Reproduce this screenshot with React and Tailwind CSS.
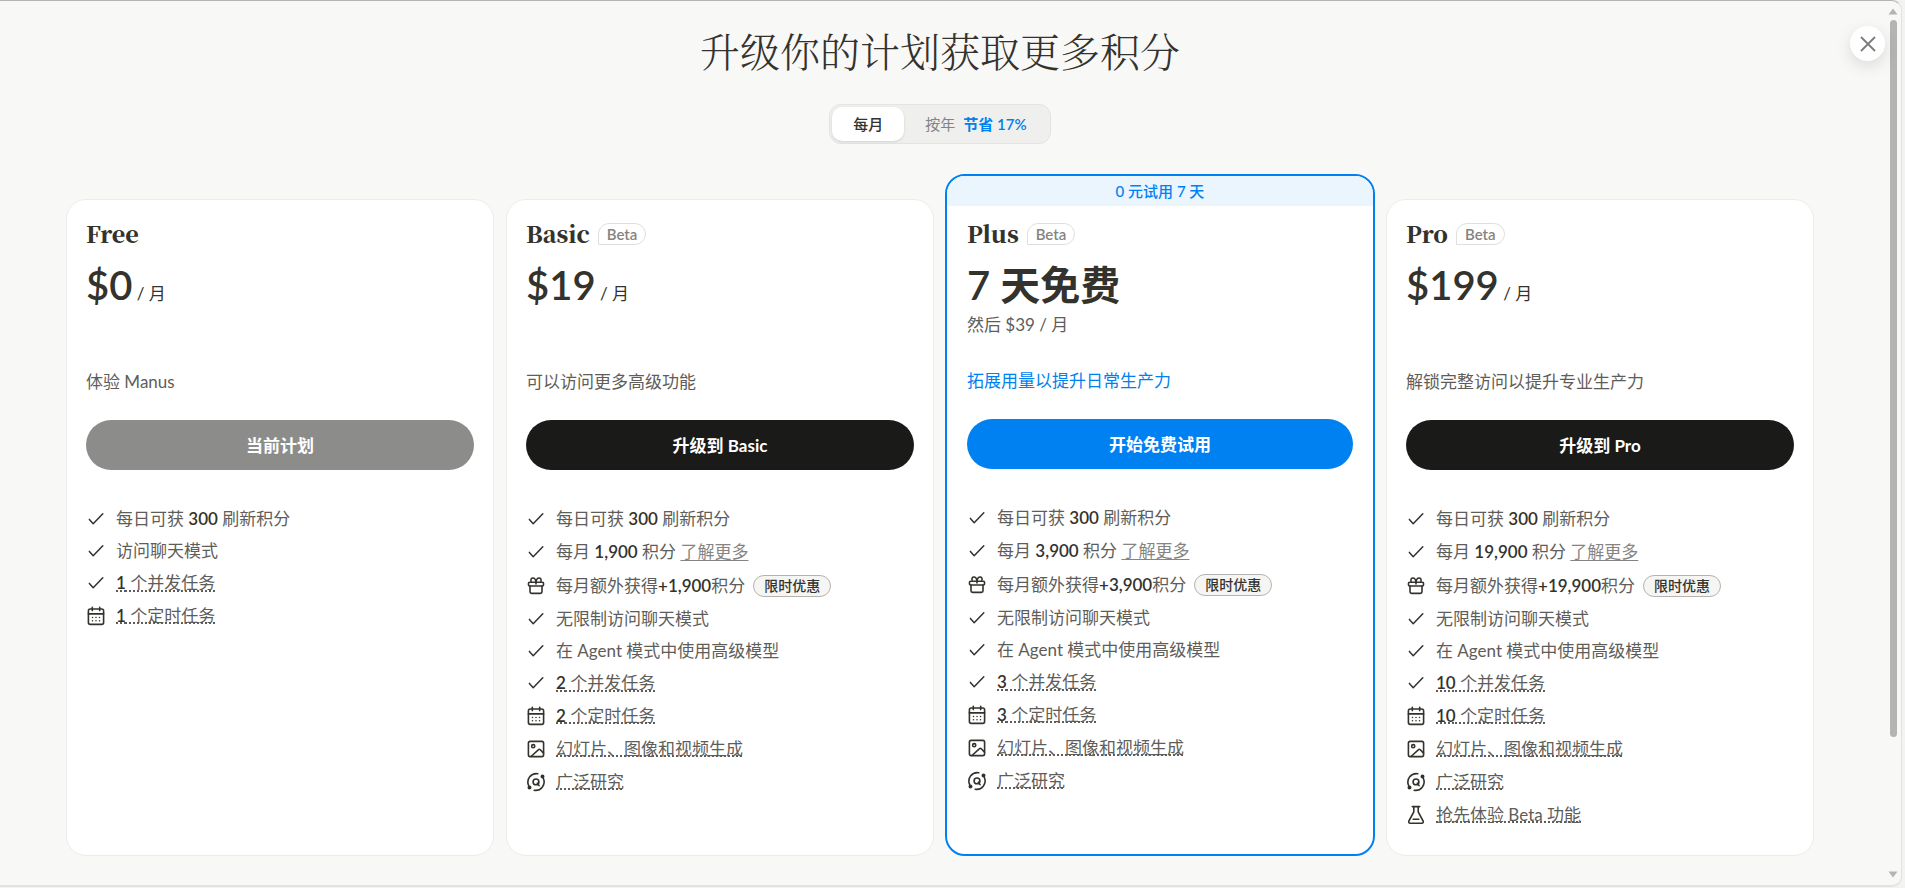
import React, { useState } from "react";

const sans = "font-['Lato','Noto_Sans_CJK_SC',sans-serif]";
const serif = "font-['Noto_Serif_CJK_SC','Noto_Serif_SC','Noto_Sans_CJK_SC',serif]";

function Icon({ children }) {
  return (
    <svg
      viewBox="0 0 20 20"
      className="size-5 shrink-0 text-[#34322d]"
      fill="none"
      stroke="currentColor"
      strokeWidth="1.6"
      strokeLinecap="round"
      strokeLinejoin="round"
      aria-hidden="true"
    >
      {children}
    </svg>
  );
}

const icons = {
  check: <path d="M3.4 10.4 7.2 14.7 16.8 4.7" strokeWidth="1.5" />,
  gift: (
    <>
      <rect x="2.5" y="6.2" width="15" height="3.8" rx="1" />
      <path d="M4 10v5.8c0 .9.6 1.600 1.600 1.600h8.800c1 0 1.600-.7 1.600-1.600V10M10 6.2v1.8" />
      <path d="M10 6.200C9.700 3.600 8.600 2 6.900 2a2 2 0 0 0-1.700 3.100M10 6.200C10.300 3.600 11.400 2 13.100 2a2 2 0 0 1 1.700 3.100" />
    </>
  ),
  calendar: (
    <>
      <rect x="2.400" y="3" width="15.200" height="15.400" rx="1.800" />
      <path d="M2.400 7.900h15.200M6.300 1.200v3.400M13.700 1.200v3.400" />
      <path d="M6.500 11.500h.01M10 11.500h.01M13.500 11.500h.01M6.500 14.700h.01M10 14.700h.01M13.500 14.700h.01" strokeWidth="1.5" />
    </>
  ),
  image: (
    <>
      <rect x="2.400" y="2.400" width="15.200" height="15.200" rx="1.800" />
      <circle cx="7.200" cy="7.200" r="1.600" />
      <path d="M5 17.500l7.300-6.700c.7-.7 1.400-.6 2 0l3.200 3.300" />
    </>
  ),
  research: (
    <>
      <path d="M11.800 1.800a8.400 8.400 0 0 0-9.200 11.600M8.200 18.200a8.400 8.400 0 0 0 9.200-11.600" />
      <circle cx="10" cy="9.900" r="2.900" />
      <path d="M11.400 11.200l1.700 2.400" />
      <circle cx="16.500" cy="4.400" r="1.200" fill="currentColor" />
      <circle cx="3.500" cy="15.600" r="1.200" fill="currentColor" />
    </>
  ),
  flask: (
    <>
      <path d="M6.300 1.600h7.400M7.800 1.600v5.200L2.900 16c-.6 1.200.1 2.300 1.300 2.300h11.600c1.200 0 1.900-1.100 1.300-2.300L12.200 6.800V1.600" />
      <path d="M7.200 14.200h5.600" />
    </>
  ),
};

function Num({ children }) {
  return <strong className="font-semibold text-[#34322d]">{children}</strong>;
}

function Tip({ children }) {
  return (
    <span className="underline decoration-dotted decoration-[#5e5d59] decoration-2 underline-offset-1">
      {children}
    </span>
  );
}

function Row({ icon = "check", className = "min-h-[22px]", children }) {
  return (
    <li className={`flex items-center gap-[10px] ${className}`}>
      <Icon>{icons[icon]}</Icon>
      <div className="flex items-center gap-2">{children}</div>
    </li>
  );
}

function Features({ credits, tasks, beta }) {
  return (
    <ul className="flex flex-col gap-[10px] text-[17px] leading-[22px] text-[#5e5d59]">
      <Row>
        <span>每日可获 <Num>300</Num> 刷新积分</span>
      </Row>
      {credits ? (
        <>
          <Row className="min-h-6">
            <span>
              每月 <Num>{credits}</Num> 积分{" "}
              <a href="#credits" className="text-[#858481] underline underline-offset-2">了解更多</a>
            </span>
          </Row>
          <Row icon="gift" className="min-h-6">
            <span>每月额外获得<Num>+{credits}</Num>积分</span>
            <span className="flex h-[22px] items-center rounded-full border border-[#b4b3b0] bg-[#f5f5f4] px-[10px] text-[14px] font-medium text-[#34322d]">
              限时优惠
            </span>
          </Row>
          <Row>无限制访问聊天模式</Row>
          <Row>在 Agent 模式中使用高级模型</Row>
        </>
      ) : (
        <Row>访问聊天模式</Row>
      )}
      <Row><Tip><Num>{tasks}</Num> 个并发任务</Tip></Row>
      <Row icon="calendar" className="min-h-[23px]"><Tip><Num>{tasks}</Num> 个定时任务</Tip></Row>
      {credits && (
        <>
          <Row icon="image" className="min-h-[23px]"><Tip>幻灯片、图像和视频生成</Tip></Row>
          <Row icon="research" className="min-h-[23px]"><Tip>广泛研究</Tip></Row>
        </>
      )}
      {beta && <Row icon="flask" className="min-h-[23px]"><Tip>抢先体验 Beta 功能</Tip></Row>}
    </ul>
  );
}

function Plan({ plan }) {
  const { name, price, then, tagline, action, featured, current } = plan;
  return (
    <section
      className={
        featured
          ? "-mx-px -mt-[25px] flex flex-col overflow-hidden rounded-[20px] border-2 border-[#0081f2] bg-white"
          : "flex flex-col overflow-hidden rounded-[20px] border border-[#ededec] bg-white"
      }
    >
      {featured && (
        <p className="h-[30px] bg-[#ebf5fe] text-center text-[15px] font-medium leading-[30px] text-[#0081f2]">
          0 元试用 7 天
        </p>
      )}
      <div className={featured ? "px-5 pb-7 pt-[14px]" : "px-[19px] pb-[29px] pt-5"}>
        <div className="flex h-[28px] items-center gap-2">
          <h2 className={`text-[23px] font-black leading-[26px] ${serif}`}>{name}</h2>
          {!current && (
            <span className="flex h-[22px] items-center rounded-full rounded-bl-none border border-[#dfdfdd] px-2 text-[15px] font-semibold text-[#858481]">
              Beta
            </span>
          )}
        </div>
        <div className={`flex flex-col ${featured ? "mt-3 h-[103px]" : "mt-3 h-[104px]"}`}>
          <p className="h-[50px] whitespace-nowrap text-[17px] leading-[50px]">
            <span className="text-[40px] font-semibold">{price}</span>
            {!then && " / 月"}
          </p>
          {then && <p className="text-[17px] leading-[30px] text-[#5e5d59]">{then}</p>}
        </div>
        <p className={`mt-[6px] text-[17px] leading-6 ${featured ? "text-[#0081f2]" : "text-[#5e5d59]"}`}>
          {tagline}
        </p>
        <button
          type="button"
          disabled={current}
          className={`mt-[26px] h-[50px] w-full rounded-full pt-[2px] text-[17px] font-bold text-white ${
            featured ? "bg-[#0081f2]" : current ? "bg-[#8c8c8b]" : "bg-[#1a1a19]"
          }`}
        >
          {action}
        </button>
        <div className="mt-[38px]">
          <Features credits={plan.credits} tasks={plan.tasks} beta={plan.beta} />
        </div>
      </div>
    </section>
  );
}

const plans = [
  { name: "Free", price: "$0", tagline: "体验 Manus", action: "当前计划", tasks: "1", current: true },
  { name: "Basic", price: "$19", tagline: "可以访问更多高级功能", action: "升级到 Basic", credits: "1,900", tasks: "2" },
  {
    name: "Plus",
    price: "7 天免费",
    then: "然后 $39 / 月",
    tagline: "拓展用量以提升日常生产力",
    action: "开始免费试用",
    credits: "3,900",
    tasks: "3",
    featured: true,
  },
  { name: "Pro", price: "$199", tagline: "解锁完整访问以提升专业生产力", action: "升级到 Pro", credits: "19,900", tasks: "10", beta: true },
];

export default function App() {
  const [yearly, setYearly] = useState(false);
  const active = "bg-white font-medium text-[#34322d] shadow-sm";
  const idle = "text-[#858481]";
  return (
    <div lang="zh-CN" className={`min-h-screen bg-[#f3f3f2] pr-[3px] pb-[1px] text-[#34322d] ${sans}`}>
      <main className="relative flex min-h-[887px] rounded-r-[10px] border-b-2 border-r border-t border-[#e2e2e1] border-t-[#b4b4b3] bg-[#f8f8f7]">
        <div className="flex-1 px-[66px]">
          <h1 className={`mt-[19px] text-center text-[40px] font-light leading-[60px] ${serif}`}>
            升级你的计划获取更多积分
          </h1>
          <div className="mt-6 flex justify-center">
            <div className="flex h-10 items-center rounded-[12px] border border-[#e4e4e3] bg-[#efefee] px-[2px] text-[15px]">
              <button
                type="button"
                onClick={() => setYearly(false)}
                className={`h-[34px] rounded-[10px] px-[21px] ${yearly ? idle : active}`}
              >
                每月
              </button>
              <button
                type="button"
                onClick={() => setYearly(true)}
                className={`flex h-[34px] items-center gap-2 rounded-[10px] px-[21px] ${yearly ? active : idle}`}
              >
                按年 <span className="font-semibold text-[#0081f2]">节省 17%</span>
              </button>
            </div>
          </div>
          <div className="mt-[55px] grid grid-cols-4 gap-3">
            {plans.map((p) => (
              <Plan key={p.name} plan={p} />
            ))}
          </div>
        </div>
        <div className="flex w-[21px] flex-col items-end justify-between py-[7px] pr-[3px]" aria-hidden="true">
          <svg viewBox="0 0 10 7" className="h-[7px] w-[10px]"><path d="M5 0.500 9.500 6.500h-9z" fill="#b4b4b3" /></svg>
          <div className="mr-px mt-[5px] w-[7px] grow-[717] rounded-full bg-[#b4b4b3]" />
          <div className="grow-[134]" />
          <svg viewBox="0 0 10 7" className="h-[7px] w-[10px]"><path d="M5 6.500 9.500 0.500h-9z" fill="#b4b4b3" /></svg>
        </div>
        <button
          type="button"
          aria-label="关闭"
          className="absolute right-4 top-[25px] flex size-[35px] items-center justify-center rounded-full bg-white shadow-[0_5px_16px_rgba(0,0,0,0.12)]"
        >
          <svg viewBox="0 0 16 16" className="size-4" fill="none" stroke="#7d7c79" strokeWidth="1.800" strokeLinecap="round">
            <path d="M1.500 1.500l13 13M14.500 1.500l-13 13" />
          </svg>
        </button>
      </main>
    </div>
  );
}
